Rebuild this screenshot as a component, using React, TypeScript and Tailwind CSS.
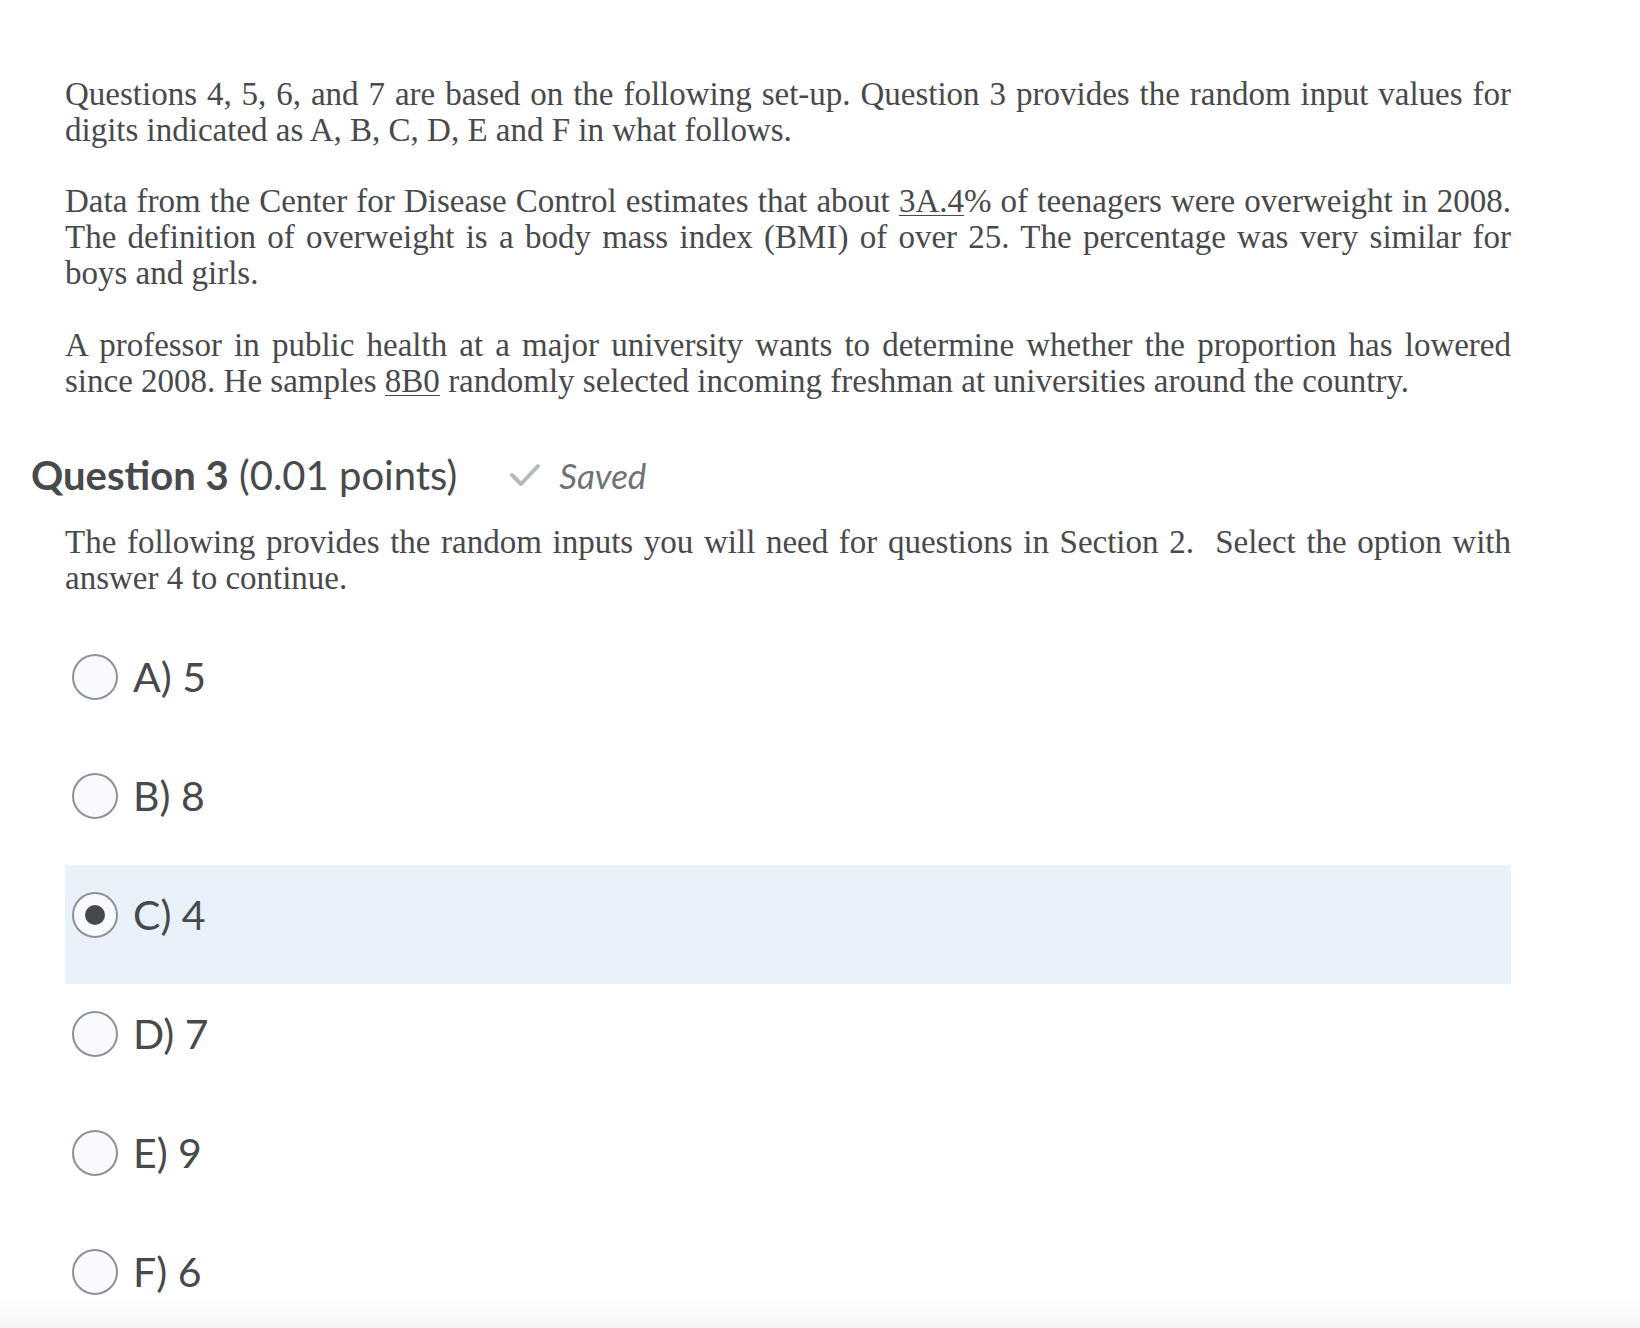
import React from "react";

const serif = { fontFamily: '"Liberation Serif", "Times New Roman", serif' };

function Radio({ checked }: { checked?: boolean }) {
  return (
    <span className="flex h-[46px] w-[46px] shrink-0 items-center justify-center rounded-full border-2 border-[#8d9296] bg-[#f8fafd]">
      {checked && <span className="h-[20px] w-[20px] rounded-full bg-[#46494b]" />}
    </span>
  );
}

const options = [
  { label: "A) 5" },
  { label: "B) 8" },
  { label: "C) 4", checked: true },
  { label: "D) 7" },
  { label: "E) 9" },
  { label: "F) 6" },
];

export default function App() {
  return (
    <div className="relative min-h-[1328px] w-full overflow-hidden bg-white text-[#47494b]">
      <div className="pl-[31px] pt-[76px]">
        <div className="w-[1480px] pl-[34px] text-[33px] leading-[36px] text-justify" style={serif}>
          <p className="w-[1446px]">
            Questions 4, 5, 6, and 7 are based on the following set-up. Question 3 provides the random input values for digits indicated as A, B, C, D, E and F in what follows.
          </p>
          <p className="mt-[35px] w-[1446px]">
            Data from the Center for Disease Control estimates that about <span className="underline underline-offset-[3px] decoration-1">3A.4</span>% of teenagers were overweight in 2008. The definition of overweight is a body mass index (BMI) of over 25. The percentage was very similar for boys and girls.
          </p>
          <p className="mt-[36px] w-[1446px]">
            A professor in public health at a major university wants to determine whether the proportion has lowered since 2008. He samples <span className="underline underline-offset-[3px] decoration-1">8B0</span> randomly selected incoming freshman at universities around the country.
          </p>
        </div>

        <div className="mt-[54px] flex h-[44px] items-center" style={{ fontFamily: "Lato, sans-serif" }}>
          <h2 className="text-[40px] leading-[44px] text-[#47494b]">
            <span className="font-bold">Question 3</span> <span>(0.01 points)</span>
          </h2>
          <span className="ml-[52px] flex items-center text-[#6e7376]">
            <svg width="32" height="26" viewBox="0 0 32 26" className="mr-[18px]">
              <path d="M3 13 L12 22 L29 4" fill="none" stroke="#b3babf" strokeWidth="4" strokeLinecap="round" strokeLinejoin="round" />
            </svg>
            <span className="text-[35px] italic leading-[44px]">Saved</span>
          </span>
        </div>

        <div className="mt-[27px] w-[1480px] pl-[34px]">
          <p className="w-[1446px] text-[33px] leading-[36px] text-justify" style={serif}>
            The following provides the random inputs you will need for questions in Section 2.&nbsp; Select the option with answer 4 to continue.
          </p>

          <div className="mt-[31px] flex w-[1446px] flex-col" style={{ fontFamily: "Lato, sans-serif" }}>
            {options.map((o) => (
              <div
                key={o.label}
                className={`flex h-[119px] items-start pl-[7px] pt-[27px] ${o.checked ? "bg-[#e9f1fb]" : ""}`}
              >
                <Radio checked={o.checked} />
                <span className="ml-[15px] text-[41px] leading-[46px] text-[#47494b]">{o.label}</span>
              </div>
            ))}
          </div>
        </div>
      </div>
      <div className="pointer-events-none absolute bottom-0 left-0 h-[44px] w-full bg-gradient-to-b from-white/0 to-[#f1f1f1]" />
    </div>
  );
}
